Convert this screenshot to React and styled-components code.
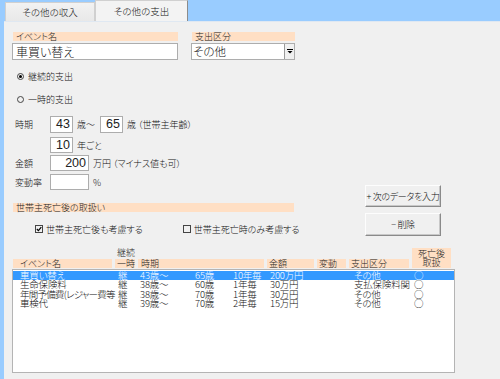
import React from 'react';
import styled, { createGlobalStyle } from 'styled-components';

const GlobalStyle = createGlobalStyle`
  html, body {
    margin: 0;
    padding: 0;
  }

  body {
    font-family: "Noto Sans CJK JP", "Noto Sans", sans-serif;
    font-feature-settings: "palt";
    font-weight: 300;
    color: #111;
  }
`;

const PEACH = '#ffdfc4';

const Screen = styled.div`
  width: 500px;
  height: 379px;
  box-sizing: border-box;
  padding-left: 4px;
  background: #99ccff;
  display: flex;
  flex-direction: column;
  overflow: hidden;
`;

const TabBar = styled.div`
  height: 21px;
  flex-shrink: 0;
  display: flex;
  align-items: flex-end;
`;

const Tab = styled.div`
  width: ${(p) => p.$w}px;
  height: ${(p) => (p.$active ? 21 : 19)}px;
  margin-left: ${(p) => p.$ml || 0}px;
  box-sizing: border-box;
  display: flex;
  align-items: center;
  justify-content: center;
  font-size: 9.5px;
  background: ${(p) => (p.$active ? '#f3f3f3' : 'linear-gradient(#f2f2f2, #e8e8e8)')};
  border: 1px solid #d0d0d0;
  border-right-color: ${(p) => (p.$active ? '#8c8c8c' : '#d0d0d0')};
  border-bottom: none;
`;

const Panel = styled.div`
  flex: 1;
  background: #f0f0f0;
  border-top: 1px solid #dfe8f2;
  padding: 10px 0 0 8px;
`;

const TopFields = styled.div`
  display: flex;
  gap: 13px;
`;

const Field = styled.div`
  width: ${(p) => p.$w}px;
`;

const Band = styled.div`
  width: ${(p) => (p.$w ? `${p.$w}px` : 'auto')};
  height: 9px;
  margin-left: 1px;
  margin-top: ${(p) => p.$mt || 0}px;
  padding-left: 3px;
  background: ${PEACH};
  font-size: 9px;
  line-height: 9px;
  color: #222;
  white-space: nowrap;
`;

const TextBox = styled.div`
  height: 17px;
  margin-top: 2px;
  box-sizing: border-box;
  border: 1px solid #adadad;
  background: #fff;
  padding-left: 3px;
  font-size: 12px;
  line-height: 15px;
`;

const SelectBox = styled.div`
  height: 17px;
  margin-top: 2px;
  box-sizing: border-box;
  border: 1px solid #adadad;
  background: #fff;
  display: flex;
  font-size: 11.5px;
  line-height: 15px;
`;

const SelectText = styled.span`
  flex: 1;
  padding-left: 1px;
`;

const DropButton = styled.span`
  width: 9px;
  border-left: 1px solid #9a9a9a;
  background: #f0f0f0;
  display: flex;
  align-items: center;
  justify-content: center;
`;

const RadioGroup = styled.div`
  margin-top: 10px;
  display: flex;
  flex-direction: column;
  gap: 11px;
`;

const OptionRow = styled.label`
  height: 12px;
  display: flex;
  align-items: center;
  padding-left: ${(p) => p.$pl || 5}px;
  font-size: 9px;
  white-space: nowrap;
`;

const RadioDot = styled.span`
  width: 7px;
  height: 7px;
  box-sizing: border-box;
  border-radius: 50%;
  border: 1px solid #444;
  margin-right: 4px;
  display: flex;
  align-items: center;
  justify-content: center;

  &::after {
    content: '';
    width: 3px;
    height: 3px;
    border-radius: 50%;
    background: ${(p) => (p.$on ? '#000' : 'transparent')};
  }
`;

const CheckBox = styled.span`
  width: 8px;
  height: 8px;
  box-sizing: border-box;
  border: 1px solid #444;
  margin-right: 3px;
  display: flex;
  align-items: center;
  justify-content: center;
`;

const Middle = styled.div`
  margin-top: 11px;
  display: flex;
`;

const LeftColumn = styled.div`
  width: 353px;
`;

const FormRow = styled.div`
  height: ${(p) => p.$h || 16}px;
  margin-top: ${(p) => p.$mt || 0}px;
  display: flex;
  align-items: center;
  font-size: 9px;
  white-space: nowrap;
`;

const RowLabel = styled.span`
  width: 35px;
  padding-left: 3px;
`;

const NumBox = styled.span`
  width: ${(p) => p.$w}px;
  height: 100%;
  box-sizing: border-box;
  border: 1px solid #adadad;
  background: #fff;
  padding-right: 2px;
  text-align: right;
  font-family: "Liberation Sans", Arial, sans-serif;
  font-weight: 400;
  font-size: 12.5px;
  line-height: 15px;
  color: #222;
`;

const Unit = styled.span`
  width: ${(p) => (p.$w ? `${p.$w}px` : 'auto')};
  margin-left: 4px;
`;

const CheckRow = styled.div`
  margin-top: 11px;
  display: flex;
`;

const ButtonColumn = styled.div`
  padding-top: 69px;
  display: flex;
  flex-direction: column;
  gap: 6px;
`;

const Button = styled.button`
  width: 76px;
  height: ${(p) => p.$h || 22}px;
  box-sizing: border-box;
  padding: 0;
  background: #f0f0f0;
  border: 1px solid;
  border-color: #fdfdfd #8a8a8a #8a8a8a #fdfdfd;
  box-shadow: inset -1px -1px 0 #c8c8c8;
  font-family: inherit;
  font-feature-settings: "palt";
  font-weight: 300;
  font-size: 9px;
  letter-spacing: -0.3px;
  white-space: nowrap;
  color: #111;
`;

const ListHeader = styled.div`
  margin-top: 12px;
  margin-left: 1px;
  height: 20px;
  display: grid;
  grid-template-columns: 99px 20px 126px 47px 29px 60px 39px;
  column-gap: 3px;
  align-items: end;
  font-size: 9px;
  color: #222;
`;

const HeadCell = styled.div`
  height: ${(p) => (p.$tall ? 20 : 9)}px;
  background: ${PEACH};
  padding-left: ${(p) => p.$pl ?? 2}px;
  line-height: 9px;
  white-space: nowrap;
  text-align: ${(p) => (p.$center ? 'center' : 'left')};
  display: ${(p) => (p.$tall ? 'flex' : 'block')};
  flex-direction: column;
  justify-content: center;
`;

const StackCell = styled.div`
  display: flex;
  flex-direction: column;
  line-height: 9px;
  white-space: nowrap;
`;

const StackTop = styled.span`
  height: 11px;
  padding-left: 2px;
`;

const ListBox = styled.div`
  margin-top: 1px;
  width: 443px;
  height: 104px;
  box-sizing: border-box;
  border: 1px solid #b4b4b4;
  background: #fff;
  padding-top: 1px;
`;

const ListRow = styled.div`
  height: 9.3px;
  display: grid;
  grid-template-columns: 102px 22px 55px 38px 38px 80px 62px 1fr;
  align-items: center;
  background: ${(p) => (p.$selected ? '#3399ff' : 'transparent')};
  color: ${(p) => (p.$selected ? '#fff' : '#111')};
  font-size: 9.5px;
  line-height: 9px;
  letter-spacing: -0.2px;
  white-space: nowrap;
`;

const Cell = styled.span`
  padding-left: ${(p) => p.$pl}px;
  min-width: 0;
  overflow: visible;
  letter-spacing: ${(p) => (p.$tight ? '-0.75px' : 'inherit')};
`;

const rows = [
  ['車買い替え', '継', '43歳〜', '65歳', '10年毎', '200万円', 'その他', '○'],
  ['生命保険料', '継', '38歳〜', '60歳', '1年毎', '30万円', '支払保険料関', '○'],
  ['年間予備費(レジャー費等', '継', '38歳〜', '70歳', '1年毎', '30万円', 'その他', '○'],
  ['車検代', '継', '39歳〜', '70歳', '2年毎', '15万円', 'その他', '○'],
];

const cellPad = [7, 3, 3, 3, 3, 2, 6, 4];

const Arrow = () => (
  <svg width="6" height="5" viewBox="0 0 6 5">
    <rect x="0" y="0" width="6" height="1" fill="#000" />
    <path d="M0.5 2 L5.5 2 L3 4.5 Z" fill="#000" />
  </svg>
);

const Tick = () => (
  <svg width="6" height="6" viewBox="0 0 6 6">
    <path d="M0.8 3 L2.4 4.6 L5.3 1.2" stroke="#000" strokeWidth="1.2" fill="none" />
  </svg>
);

export default function App() {
  return (
    <Screen>
      <GlobalStyle />
      <TabBar>
        <Tab $w={90} $ml={1}>その他の収入</Tab>
        <Tab $w={93} $active>その他の支出</Tab>
      </TabBar>
      <Panel>
        <TopFields>
          <Field $w={166}>
            <Band>イベント名</Band>
            <TextBox>車買い替え</TextBox>
          </Field>
          <Field $w={104}>
            <Band>支出区分</Band>
            <SelectBox>
              <SelectText>その他</SelectText>
              <DropButton><Arrow /></DropButton>
            </SelectBox>
          </Field>
        </TopFields>

        <RadioGroup>
          <OptionRow><RadioDot $on />継続的支出</OptionRow>
          <OptionRow><RadioDot />一時的支出</OptionRow>
        </RadioGroup>

        <Middle>
          <LeftColumn>
            <FormRow $h={17}>
              <RowLabel>時期</RowLabel>
              <NumBox $w={23}>43</NumBox>
              <Unit $w={23}>歳〜</Unit>
              <NumBox $w={23}>65</NumBox>
              <Unit>歳 （世帯主年齢）</Unit>
            </FormRow>
            <FormRow $mt={4}>
              <RowLabel />
              <NumBox $w={23}>10</NumBox>
              <Unit>年ごと</Unit>
            </FormRow>
            <FormRow $mt={2}>
              <RowLabel>金額</RowLabel>
              <NumBox $w={39}>200</NumBox>
              <Unit>万円 （マイナス値も可）</Unit>
            </FormRow>
            <FormRow $mt={3}>
              <RowLabel>変動率</RowLabel>
              <NumBox $w={39} />
              <Unit>%</Unit>
            </FormRow>

            <Band $w={278} $mt={13}>世帯主死亡後の取扱い</Band>
            <CheckRow>
              <OptionRow $pl={23}><CheckBox><Tick /></CheckBox>世帯主死亡後も考慮する</OptionRow>
              <OptionRow $pl={40}><CheckBox />世帯主死亡時のみ考慮する</OptionRow>
            </CheckRow>
          </LeftColumn>
          <ButtonColumn>
            <Button>+ 次のデータを入力</Button>
            <Button $h={23}>− 削除</Button>
          </ButtonColumn>
        </Middle>

        <ListHeader>
          <HeadCell $pl={7}>イベント名</HeadCell>
          <StackCell>
            <StackTop>継続</StackTop>
            <HeadCell>一時</HeadCell>
          </StackCell>
          <HeadCell $pl={3}>時期</HeadCell>
          <HeadCell>金額</HeadCell>
          <HeadCell>変動</HeadCell>
          <HeadCell>支出区分</HeadCell>
          <HeadCell $tall $center $pl={0}>
            <span>死亡後</span>
            <span>取扱</span>
          </HeadCell>
        </ListHeader>
        <ListBox>
          {rows.map((r, i) => (
            <ListRow key={i} $selected={i === 0}>
              {r.map((c, j) => (
                <Cell key={j} $pl={cellPad[j]} $tight={c.length > 8}>{c}</Cell>
              ))}
            </ListRow>
          ))}
        </ListBox>
      </Panel>
    </Screen>
  );
}
